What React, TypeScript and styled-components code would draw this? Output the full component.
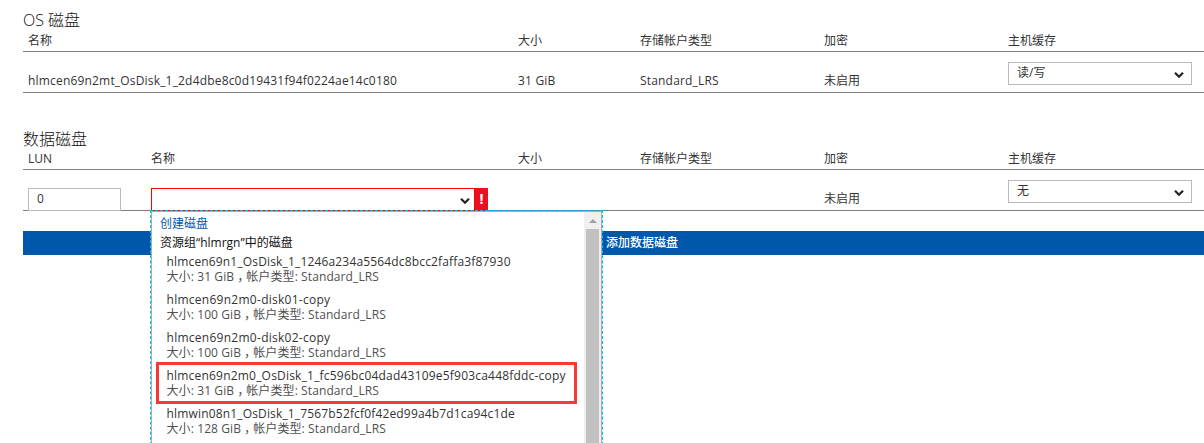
import React from 'react';
import styled, { createGlobalStyle } from 'styled-components';

const Global = createGlobalStyle`
  * { box-sizing: border-box; }
  body {
    margin: 0;
    background: #fff;
    color: #333;
    overflow: hidden;
    font: 12px/16px "Open Sans", "Noto Sans CJK SC", sans-serif;
  }
`;

const Page = styled.main`
  width: 1204px;
  height: 443px;
  overflow: hidden;
  padding: 10px 0 0 23px;
`;

const Section = styled.section`
  height: 118px;
`;

const Title = styled.h2<{ $top?: number }>`
  margin: 0;
  height: 23px;
  padding-top: ${p => p.$top ?? 0}px;
  font-size: 16px;
  font-weight: 300;
  line-height: 20px;
  color: #111;
`;

const Row = styled.div<{ $head?: boolean; $lun?: boolean }>`
  display: grid;
  grid-template-columns: ${p => (p.$lun ? '123px 367px' : '490px')} 122px 184px 184px 184px;
  height: ${p => (p.$head ? 19 : 41)}px;
  padding-left: 5px;
  border-bottom: 1px solid #808080;
  white-space: nowrap;
`;

const Cell = styled.div<{ $top?: number }>`
  position: relative;
  padding-top: ${p => p.$top ?? 0}px;
`;

const Text = styled.span<{ $ls?: number }>`
  letter-spacing: ${p => p.$ls ?? 0}px;
`;

const Field = styled.div<{ $width: number; $error?: boolean }>`
  display: flex;
  justify-content: space-between;
  width: ${p => p.$width}px;
  height: 23px;
  padding: 2px ${p => (p.$error ? 4 : 7)}px 0 8px;
  border: 1px solid ${p => (p.$error ? '#ff0000' : '#bababa')};
  background: #fff;
`;

const Chevron = styled.svg`
  display: block;
  width: 10px;
  height: 8px;
  margin-top: 6px;
`;

const Combo = styled.div`
  display: flex;
`;

const ErrorMark = styled.div`
  width: 13px;
  height: 23px;
  background: #e81123;
  color: #fff;
  font-weight: 700;
  font-size: 14px;
  line-height: 21px;
  text-align: center;
`;

const AddBar = styled.div`
  height: 24px;
  margin-top: -15px;
  padding-left: 583px;
  background: #0058ad;
  color: #fff;
  font-weight: 500;
  line-height: 24px;
`;

const Popup = styled.div`
  position: absolute;
  z-index: 2;
  top: 40px;
  left: -1px;
  width: 453px;
  height: 260px;
  border: 1px dashed #00bcf2;
`;

const PopupBody = styled.div`
  display: flex;
  height: 100%;
  border: 1px solid #ababab;
  background: #fff;
`;

const List = styled.div`
  flex: 1;
  padding: 4px 0 0 8px;
`;

const Create = styled.div`
  height: 19px;
  color: #0058ad;
`;

const Group = styled.div`
  height: 19px;
  color: #111;
`;

const Item = styled.div`
  position: relative;
  height: 38px;
  padding-left: 6.5px;
  line-height: 15px;
`;

const Sub = styled.div`
  height: 15px;
  color: #505050;
  letter-spacing: 0.1px;
`;

const Comma = styled.span`
  font-family: "Noto Sans CJK TC", sans-serif;
  line-height: 0;
  vertical-align: -4px;
`;

const Highlight = styled.div`
  position: absolute;
  top: -6px;
  left: -4px;
  width: 421px;
  height: 42px;
  border: 3px solid #fb3838;
`;

const Track = styled.div`
  width: 17px;
  padding: 7px 2px 0;
  background: #f0f0f0;
`;

const Arrow = styled.div`
  width: 0;
  margin: 0 auto 6px 3px;
  border: 4px solid transparent;
  border-top: 0;
  border-bottom-color: #a0a0a0;
`;

const Thumb = styled.div`
  width: 13px;
  height: 260px;
  background: #c1c1c1;
`;

const Down = () => (
  <Chevron viewBox="0 0 10 8">
    <path d="M1 1.7 5 5.7 9 1.7" fill="none" stroke="#222" strokeWidth="2.2" />
  </Chevron>
);

const disks = [
  { name: 'hlmcen69n1_OsDisk_1_1246a234a5564dc8bcc2faffa3f87930', size: 31, ls: 0.16 },
  { name: 'hlmcen69n2m0-disk01-copy', size: 100, ls: 0.27 },
  { name: 'hlmcen69n2m0-disk02-copy', size: 100, ls: 0.27 },
  { name: 'hlmcen69n2m0_OsDisk_1_fc596bc04dad43109e5f903ca448fddc-copy', size: 31, ls: 0.2, marked: true },
  { name: 'hlmwin08n1_OsDisk_1_7567b52fcf0f42ed99a4b7d1ca94c1de', size: 128, ls: 0.16 },
];

const SharedHeads = () => (
  <>
    <Cell>大小</Cell>
    <Cell>存储帐户类型</Cell>
    <Cell>加密</Cell>
    <Cell>主机缓存</Cell>
  </>
);

export default function App() {
  return (
    <>
      <Global />
      <Page>
        <Section>
          <Title>OS 磁盘</Title>
          <Row $head>
            <Cell>名称</Cell>
            <SharedHeads />
          </Row>
          <Row>
            <Cell $top={21}><Text $ls={0.18}>hlmcen69n2mt_OsDisk_1_2d4dbe8c0d19431f94f0224ae14c0180</Text></Cell>
            <Cell $top={21}><Text $ls={0.2}>31 GiB</Text></Cell>
            <Cell $top={21}><Text $ls={0.18}>Standard_LRS</Text></Cell>
            <Cell $top={21}>未启用</Cell>
            <Cell $top={10}><Field $width={184}><span>读/写</span><Down /></Field></Cell>
          </Row>
        </Section>
        <Section>
          <Title $top={1}>数据磁盘</Title>
          <Row $head $lun>
            <Cell>LUN</Cell>
            <Cell>名称</Cell>
            <SharedHeads />
          </Row>
          <Row $lun>
            <Cell $top={18}><Field $width={93}>0</Field></Cell>
            <Cell $top={18}>
              <Combo>
                <Field $width={324} $error><span /><Down /></Field>
                <ErrorMark>!</ErrorMark>
              </Combo>
              <Popup>
                <PopupBody>
                  <List>
                    <Create>创建磁盘</Create>
                    <Group>资源组“hlmrgn”中的磁盘</Group>
                    {disks.map(d => (
                      <Item key={d.name}>
                        <Text $ls={d.ls}>{d.name}</Text>
                        <Sub>大小: {d.size} GiB<Comma>，</Comma>帐户类型: Standard_LRS</Sub>
                        {d.marked && <Highlight />}
                      </Item>
                    ))}
                  </List>
                  <Track><Arrow /><Thumb /></Track>
                </PopupBody>
              </Popup>
            </Cell>
            <Cell />
            <Cell />
            <Cell $top={21}>未启用</Cell>
            <Cell $top={10}><Field $width={184}><span>无</span><Down /></Field></Cell>
          </Row>
        </Section>
        <AddBar>添加数据磁盘</AddBar>
      </Page>
    </>
  );
}
